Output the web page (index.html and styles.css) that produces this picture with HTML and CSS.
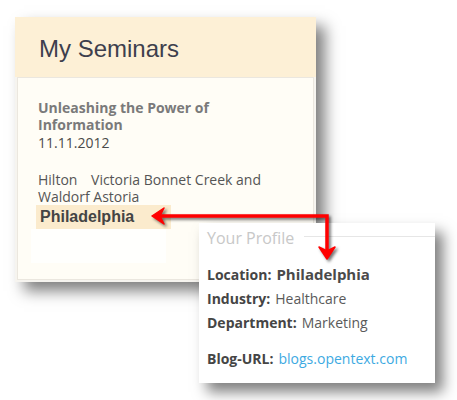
FILE: index.html
```html
<!DOCTYPE html>
<html lang="en">
<head>
  <meta charset="UTF-8">
  <meta name="viewport" content="width=device-width, initial-scale=1.0">
  <title>My Seminars</title>
  <link rel="stylesheet" href="styles.css">
</head>
<body>
  <div class="page">
    <div class="seminars">
      <div class="seminars-head">
        <h1>My Seminars</h1>
      </div>
      <div class="seminars-body">
        <div class="event-title">Unleashing the Power of<br>Information</div>
        <div class="event-date">11.11.2012</div>
        <div class="event-venue">Hilton <span class="venue-gap">Victoria Bonnet Creek and</span><br>Waldorf Astoria</div>
        <div class="event-city">Philadelphia</div>
        <div class="event-spacer"></div>
      </div>
    </div>

    <div class="profile">
      <div class="profile-legend">
        <span>Your Profile</span>
        <div class="profile-rule"></div>
      </div>
      <div class="profile-row first">
        <span class="label">Location:</span>
        <span class="city">Philadelphia</span>
      </div>
      <div class="profile-row">
        <span class="label">Industry:</span>
        <span class="value">Healthcare</span>
      </div>
      <div class="profile-row">
        <span class="label">Department:</span>
        <span class="value">Marketing</span>
      </div>
      <div class="profile-row blog">
        <span class="label">Blog-URL:</span>
        <a class="link" href="#">blogs.opentext.com</a>
      </div>
    </div>

    <!-- connector arrow between the two cities -->
    <svg class="arrow" width="457" height="400" viewBox="0 0 457 400">
      <path d="M156 216 H327 V253" fill="none" stroke="#ff0000" stroke-width="3.5"/>
      <path d="M152 216 L164 208 L160 216 L164 224 Z" fill="#ff0000" stroke="#ff0000" stroke-width="1.5" stroke-linejoin="round"/>
      <path d="M327 259 L319 247 L327 251 L335 247 Z" fill="#ff0000" stroke="#ff0000" stroke-width="1.5" stroke-linejoin="round"/>
    </svg>
  </div>
</body>
</html>
```

FILE: styles.css
```css
body {
  margin: 0;
  background: #fff;
  font-family: "Open Sans", sans-serif;
}
.page {
  position: relative;
  width: 457px;
  height: 400px;
  padding: 17px 0 0 15px;
  box-sizing: border-box;
}
.seminars {
  width: 301px;
  height: 265px;
  display: flex;
  flex-direction: column;
  background: #f6f4ef;
  box-shadow: 9px 9px 14px rgba(0, 0, 0, 0.5);
}
.seminars-head {
  height: 60px;
  padding: 18px 0 0 24px;
  box-sizing: border-box;
  background: #fdf0d6;
}
.seminars-head h1 {
  margin: 0;
  font-family: "Liberation Sans", Arial, sans-serif;
  font-weight: normal;
  font-size: 24px;
  line-height: 28px;
  color: #3e3f4d;
}
.seminars-body {
  flex: 1;
  margin: 0 2px 2px;
  padding: 21px 0 0 20px;
  border: 1px solid #ebe7df;
  background: #fffdf6;
}
.event-title {
  font-size: 14px;
  font-weight: bold;
  line-height: 17px;
  color: #7a7a7a;
}
.event-date {
  margin-top: 1px;
  font-size: 14px;
  line-height: 18px;
  color: #4a4a4a;
}
.event-venue {
  margin-top: 19px;
  font-size: 14px;
  line-height: 17px;
  color: #555;
}
.venue-gap {
  margin-left: 10px;
}
.event-city {
  width: 131px;
  height: 24px;
  margin-left: -2px;
  padding-left: 4px;
  font-family: "Liberation Sans", Arial, sans-serif;
  font-weight: bold;
  font-size: 16px;
  line-height: 24px;
  color: #444;
  background: #fbebcd;
}
.event-spacer {
  width: 135px;
  height: 34px;
  margin-left: -7px;
  background: #fffffd;
}
.profile {
  position: absolute;
  left: 199px;
  top: 223px;
  width: 236px;
  height: 160px;
  padding: 4px 0 0 8px;
  box-sizing: border-box;
  background: #fff;
  box-shadow: 8px 9px 13px rgba(0, 0, 0, 0.5);
}
.profile-legend {
  display: flex;
  align-items: center;
  gap: 10px;
  font-size: 16px;
  line-height: 22px;
  color: #c8c8c8;
}
.profile-rule {
  flex: 1;
  height: 1px;
  margin-top: -4px;
  background: #e6e6e6;
}
.profile-row {
  display: flex;
  align-items: baseline;
  gap: 5px;
  font-size: 14px;
  line-height: 24px;
  color: #5a5a5a;
}
.profile-row.first {
  margin-top: 13px;
}
.profile-row.blog {
  margin-top: 12px;
}
.label {
  font-weight: bold;
  color: #454545;
}
.city {
  font-weight: bold;
  font-size: 15px;
  color: #4a4a4a;
}
.link {
  color: #3daae2;
  text-decoration: none;
}
.arrow {
  position: absolute;
  left: 0;
  top: 0;
  filter: drop-shadow(2px 2px 1.5px rgba(0, 0, 0, 0.55));
}
```
